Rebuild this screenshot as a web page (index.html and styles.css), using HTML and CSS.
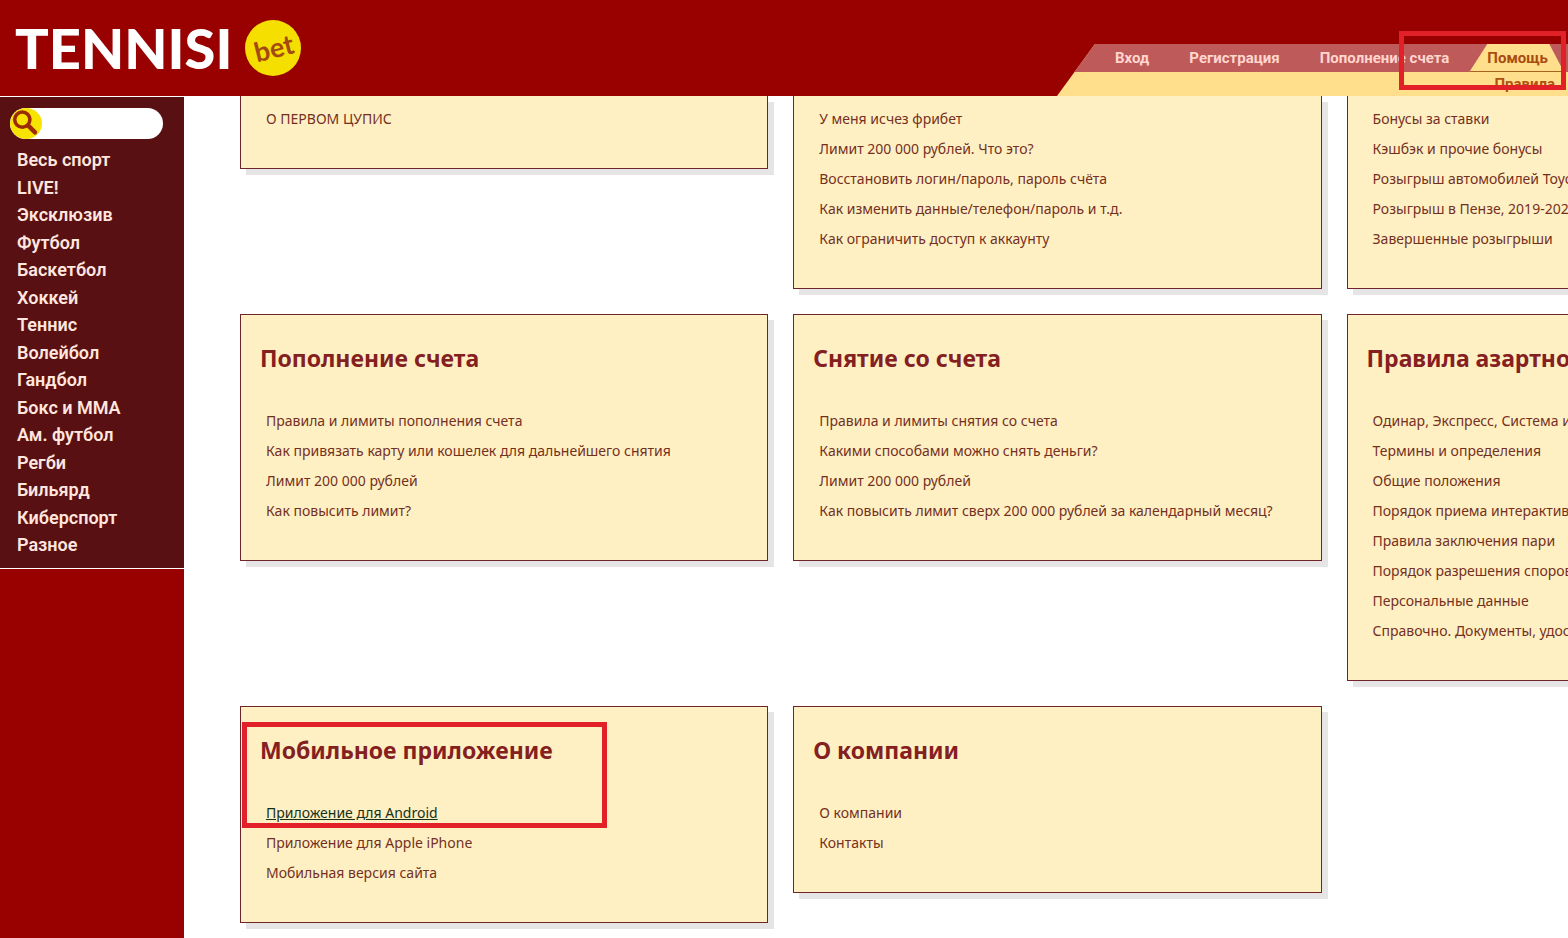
FILE: index.html
```html
<!DOCTYPE html>
<html lang="ru">
<head>
<meta charset="utf-8">
<title>TENNISI bet — Помощь</title>
<meta name="viewport" content="width=device-width, initial-scale=1">
<link rel="stylesheet" href="styles.css">
</head>
<body>
<header class="header">
  <a class="logo" href="#" aria-label="TENNISI bet">
    <span class="logo-name">TENNISI</span>
    <span class="logo-badge"><span class="logo-bet">bet</span></span>
  </a>
  <div class="top-nav">
    <nav class="tabs">
      <a class="tab" href="#">Вход</a>
      <a class="tab" href="#">Регистрация</a>
      <a class="tab" href="#">Пополнение счета</a>
      <a class="tab tab-active" href="#">Помощь</a>
    </nav>
    <nav class="subnav"><a class="subnav-link" href="#">Правила</a></nav>
  </div>
  <div class="mark mark-help"></div>
</header>
<div class="layout">
  <aside class="sidebar">
    <div class="sidebar-panel">
      <form class="search">
        <button class="search-button" type="button" aria-label="Поиск">
          <svg viewBox="0 0 32 32" width="32" height="32" aria-hidden="true">
            <circle cx="12.3" cy="11.6" r="7.6" fill="none" stroke="#9c2c06" stroke-width="3.6"/>
            <path d="M18 17.4l7 7" fill="none" stroke="#9c2c06" stroke-width="4.4" stroke-linecap="round"/>
          </svg>
        </button>
        <input class="search-input" type="search" aria-label="Поиск">
      </form>
      <ul class="sports">
        <li><a href="#">Весь спорт</a></li>
        <li><a href="#">LIVE!</a></li>
        <li><a href="#">Эксклюзив</a></li>
        <li><a href="#">Футбол</a></li>
        <li><a href="#">Баскетбол</a></li>
        <li><a href="#">Хоккей</a></li>
        <li><a href="#">Теннис</a></li>
        <li><a href="#">Волейбол</a></li>
        <li><a href="#">Гандбол</a></li>
        <li><a href="#">Бокс и ММА</a></li>
        <li><a href="#">Ам. футбол</a></li>
        <li><a href="#">Регби</a></li>
        <li><a href="#">Бильярд</a></li>
        <li><a href="#">Киберспорт</a></li>
        <li><a href="#">Разное</a></li>
      </ul>
    </div>
  </aside>
  <main class="content">
    <section class="card card-cut">
      <ul class="links">
        <li><a href="#">О ПЕРВОМ ЦУПИС</a></li>
      </ul>
    </section>
    <section class="card card-cut">
      <ul class="links">
        <li><a href="#">У меня исчез фрибет</a></li>
        <li><a href="#">Лимит 200 000 рублей. Что это?</a></li>
        <li><a href="#">Восстановить логин/пароль, пароль счёта</a></li>
        <li><a href="#">Как изменить данные/телефон/пароль и т.д.</a></li>
        <li><a href="#">Как ограничить доступ к аккаунту</a></li>
      </ul>
    </section>
    <section class="card card-cut">
      <ul class="links">
        <li><a href="#">Бонусы за ставки</a></li>
        <li><a href="#">Кэшбэк и прочие бонусы</a></li>
        <li><a href="#">Розыгрыш автомобилей Toyota</a></li>
        <li><a href="#">Розыгрыш в Пензе, 2019-2020</a></li>
        <li><a href="#">Завершенные розыгрыши</a></li>
      </ul>
    </section>
    <section class="card">
      <h2 class="card-title">Пополнение счета</h2>
      <ul class="links">
        <li><a href="#">Правила и лимиты пополнения счета</a></li>
        <li><a href="#">Как привязать карту или кошелек для дальнейшего снятия</a></li>
        <li><a href="#">Лимит 200 000 рублей</a></li>
        <li><a href="#">Как повысить лимит?</a></li>
      </ul>
    </section>
    <section class="card">
      <h2 class="card-title">Снятие со счета</h2>
      <ul class="links">
        <li><a href="#">Правила и лимиты снятия со счета</a></li>
        <li><a href="#">Какими способами можно снять деньги?</a></li>
        <li><a href="#">Лимит 200 000 рублей</a></li>
        <li><a href="#">Как повысить лимит сверх 200 000 рублей за календарный месяц?</a></li>
      </ul>
    </section>
    <section class="card">
      <h2 class="card-title">Правила азартной игры</h2>
      <ul class="links">
        <li><a href="#">Одинар, Экспресс, Система и</a></li>
        <li><a href="#">Термины и определения</a></li>
        <li><a href="#">Общие положения</a></li>
        <li><a href="#">Порядок приема интерактивных ставок</a></li>
        <li><a href="#">Правила заключения пари</a></li>
        <li><a href="#">Порядок разрешения споров</a></li>
        <li><a href="#">Персональные данные</a></li>
        <li><a href="#">Справочно. Документы, удостоверяющие личность</a></li>
      </ul>
    </section>
    <section class="card">
      <h2 class="card-title">Мобильное приложение</h2>
      <ul class="links">
        <li><a class="link-current" href="#">Приложение для Android</a></li>
        <li><a href="#">Приложение для Apple iPhone</a></li>
        <li><a href="#">Мобильная версия сайта</a></li>
      </ul>
      <div class="mark mark-app"></div>
    </section>
    <section class="card">
      <h2 class="card-title">О компании</h2>
      <ul class="links">
        <li><a href="#">О компании</a></li>
        <li><a href="#">Контакты</a></li>
      </ul>
    </section>
  </main>
</div>
</body>
</html>
```

FILE: styles.css
```css
* {
  box-sizing: border-box;
}

body {
  margin: 0;
  min-height: 100vh;
  display: flex;
  flex-direction: column;
  overflow: hidden;
  background: #fff;
  font-family: "Noto Sans", "Open Sans", sans-serif;
}

a {
  color: inherit;
  text-decoration: none;
}

ul {
  margin: 0;
  padding: 0;
  list-style: none;
}

/* Header */
.header {
  position: relative;
  z-index: 1;
  display: flex;
  justify-content: space-between;
  height: 96px;
  background: #990000;
  font-family: Roboto, sans-serif;
}

.logo {
  display: flex;
  align-items: center;
  gap: 13px;
  padding-left: 15px;
  font-family: Lato, sans-serif;
}

.logo-name {
  color: #fff;
  font-size: 56px;
  font-weight: 900;
  line-height: 56px;
}

.logo-badge {
  display: flex;
  align-items: center;
  justify-content: center;
  width: 56px;
  height: 56px;
  border-radius: 50%;
  background: #f5df00;
}

.logo-bet {
  color: #a34a10;
  font-size: 27px;
  font-weight: 700;
  line-height: 36px;
  transform: rotate(-14deg);
}

.top-nav {
  display: flex;
  flex-direction: column;
  align-self: flex-end;
  background: #ffde8c;
  clip-path: polygon(38px 0, 100% 0, 100% 100%, 0 100%);
  font-size: 15px;
  font-weight: 700;
}

.tabs {
  display: flex;
  gap: 40px;
  height: 28px;
  padding-left: 58px;
  background: #bf5a5a;
  color: #ffd6cf;
  line-height: 28px;
}

.tab-active {
  margin: 0 4px 0 -20px;
  padding: 0 16px 0 18px;
  border-bottom: 1px solid #a8641c;
  background: #ffde8c;
  color: #a84c12;
  clip-path: polygon(18px 0, 80px 0, 100% 100%, 0 100%);
}

.subnav {
  padding-right: 13px;
  color: #b0520f;
  line-height: 24px;
  text-align: right;
}

.mark {
  position: absolute;
  border: 5px solid #e22028;
  pointer-events: none;
}

.mark-help {
  top: 31px;
  right: 2px;
  width: 167px;
  height: 59px;
}

.mark-app {
  top: 15px;
  left: 1px;
  width: 365px;
  height: 106px;
}

/* Page columns */
.layout {
  display: flex;
  flex: 1;
}

.sidebar {
  flex: none;
  width: 184px;
  background: #990000;
  font-family: Roboto, sans-serif;
}

.sidebar-panel {
  display: flex;
  flex-direction: column;
  min-height: 473px;
  padding: 11px 21px 10px 10px;
  border-top: 1px solid #fff;
  border-bottom: 1px solid #fff;
  background: #581012;
}

.search {
  display: flex;
  height: 31px;
  border-radius: 16px;
  background: #fff;
  overflow: hidden;
}

.search-button {
  width: 32px;
  padding: 0;
  border: 0;
  border-radius: 50%;
  background: #f8e400;
}

.search-button svg {
  display: block;
}

.search-input {
  flex: 1;
  min-width: 0;
  border: 0;
  outline: 0;
  background: transparent;
  font-size: 15px;
}

.sports {
  display: flex;
  flex: 1;
  flex-direction: column;
  justify-content: space-between;
  margin-top: 7px;
  padding-left: 7px;
  color: #ffe6de;
  font-size: 18px;
  font-weight: 600;
  line-height: 27px;
}

/* Help cards */
.content {
  display: grid;
  flex: 1;
  grid-template-columns: repeat(3, 39.78%);
  align-content: start;
  align-items: start;
  gap: 25px;
  min-width: 0;
  padding-left: 56px;
}

.card {
  position: relative;
  padding: 28px 19px 34px;
  border: 1px solid #6e2428;
  background: #fff0c4;
  box-shadow: 6px 6px 0 #e6e4e4;
  color: #74301e;
  white-space: nowrap;
}

.card-cut {
  padding-top: 8px;
  border-top: 0;
}

.card-title {
  margin: 0 0 33px;
  color: #84201f;
  font-size: 23px;
  font-weight: 700;
  line-height: 30px;
}

.links {
  padding-left: 6px;
  font-size: 14px;
  line-height: 30px;
}

.link-current {
  color: #16301a;
  text-decoration: underline;
}
```
